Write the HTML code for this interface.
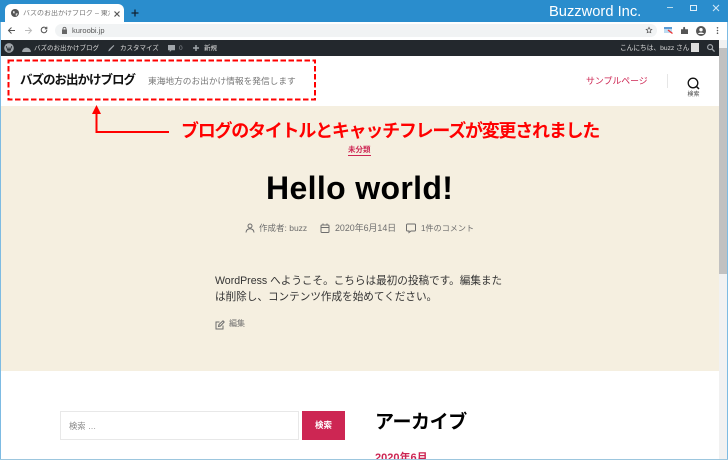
<!DOCTYPE html>
<html lang="ja"><head><meta charset="utf-8">
<style>
html,body{margin:0;padding:0;width:728px;height:460px;overflow:hidden;background:#fff}
body{position:relative;font-family:"Liberation Sans","Noto Sans CJK JP",sans-serif}
.a{position:absolute;white-space:nowrap;line-height:1}
svg{position:absolute;overflow:visible}
</style></head><body>
<!-- title bar -->
<div class="a" style="left:0;top:0;width:728px;height:22px;background:#2a8dcd"></div>
<div class="a" style="left:5px;top:4px;width:119px;height:18px;background:#fff;border-radius:6px 6px 0 0"></div>
<svg style="left:11px;top:9px" width="8" height="8" viewBox="0 0 12 12"><circle cx="6" cy="6" r="6" fill="#555"/><path d="M3 3l3 1-1 3-2-1zM7 7l3-1-1 4-2 0z" fill="#ddd"/></svg>
<div class="a" style="left:23px;top:10px;font-size:7px;color:#777;width:87px;overflow:hidden">バズのお出かけブログ – 東海地方のお</div>
<svg style="left:113.500px;top:10.500px" width="6" height="6"><path d="M0.500 0.500l5 5M5.500 0.500l-5 5" stroke="#555" stroke-width="1.200"/></svg>
<svg style="left:131px;top:9px" width="8" height="8"><path d="M4 0.500v7M0.500 4h7" stroke="#123" stroke-width="1.300"/></svg>
<div class="a" style="left:549px;top:3px;font-size:14.700px;color:#fff;line-height:19px">Buzzword Inc.</div>
<div class="a" style="left:667px;top:7px;width:6px;height:1px;background:#bde"></div>
<div class="a" style="left:690px;top:5px;width:5px;height:4px;border:1px solid #dfeefa"></div>
<svg style="left:713px;top:5px" width="6" height="6"><path d="M0 0l6 6M6 0l-6 6" stroke="#cfe6f6" stroke-width="1.100"/></svg>
<!-- toolbar -->
<div class="a" style="left:0;top:22px;width:728px;height:18px;background:#fff"></div>
<div class="a" style="left:55px;top:24px;width:602px;height:13px;background:#f1f3f4;border-radius:7px"></div>
<svg style="left:8px;top:27px" width="24" height="7" viewBox="0 0 24 7" fill="none" stroke-width="1"><path d="M7 3.500H0.500M3.500 0.500L0.500 3.500 3.500 6.500" stroke="#555"/><path d="M17 3.500h6.500M20.500 0.500L23.500 3.500 20.500 6.500" stroke="#bbb"/></svg>
<svg style="left:40px;top:26px" width="8" height="8" viewBox="0 0 10 10" fill="none"><path d="M8.500 5a3.500 3.500 0 1 1-1-2.500M8.500 1v2.500H6" stroke="#555" stroke-width="1.300"/></svg>
<svg style="left:62px;top:27px" width="5" height="7"><rect x="0" y="2.500" width="5" height="4.500" fill="#666"/><path d="M1 3V1.800a1.500 1.500 0 0 1 3 0V3" fill="none" stroke="#666" stroke-width="0.900"/></svg>
<div class="a" style="left:72px;top:26.500px;font-size:7.500px;color:#555">kuroobi.jp</div>
<svg style="left:646px;top:27px" width="6" height="6" viewBox="0 0 10 10"><path d="M5 0.500l1.400 3 3.300 0.400-2.400 2.200 0.700 3.300L5 8.100 2 9.400l0.700-3.300L0.300 3.900l3.300-0.400z" fill="none" stroke="#555" stroke-width="1.200"/></svg>
<div class="a" style="left:664px;top:27px;width:8px;height:6px;background:#bcdcf2;border-top:2px solid #5b9bd5;box-sizing:border-box"></div>
<svg style="left:668px;top:30px" width="5" height="4"><path d="M0 0l4.500 3.500" stroke="#e33" stroke-width="1.300"/></svg>
<svg style="left:681px;top:27px" width="7" height="7" viewBox="0 0 8 8"><path d="M0 2.500h2.500V1a1 1 0 0 1 2.200 0v1.500H8V8H0z" fill="#555"/></svg>
<svg style="left:696px;top:26px" width="10" height="10"><circle cx="5" cy="5" r="5" fill="#555"/><circle cx="5" cy="3.700" r="1.700" fill="#fff"/><path d="M1.800 8a3.500 2.500 0 0 1 6.400 0z" fill="#fff"/></svg>
<svg style="left:716px;top:27px" width="3" height="7"><circle cx="1.500" cy="0.800" r="0.800" fill="#555"/><circle cx="1.500" cy="3.500" r="0.800" fill="#555"/><circle cx="1.500" cy="6.200" r="0.800" fill="#555"/></svg>
<!-- admin bar -->
<div class="a" style="left:0;top:40px;width:719px;height:16px;background:#23282d"></div>
<svg style="left:4px;top:43px" width="10" height="10" viewBox="0 0 11 11"><circle cx="5.500" cy="5.500" r="5.300" fill="#a0a5aa"/><path d="M2.500 3.500l2 5 1-3 1 3 2-5" stroke="#23282d" fill="none"/></svg>
<svg style="left:22px;top:45px" width="9" height="7" viewBox="0 0 10 8"><path d="M0 8a5 5 0 0 1 10 0z" fill="#a0a5aa"/></svg>
<div class="a" style="left:34px;top:46px;font-size:6.500px;color:#ddd">バズのお出かけブログ</div>
<svg style="left:108px;top:45px" width="7" height="7" viewBox="0 0 10 10"><path d="M0 9c2 0 3-1 3.500-2L9 1 8 0 2 5.500C1 6.500 1 8 0 9z" fill="#a0a5aa"/></svg>
<div class="a" style="left:120px;top:46px;font-size:6.500px;color:#ddd">カスタマイズ</div>
<svg style="left:168px;top:45px" width="7" height="7" viewBox="0 0 8 8"><path d="M0 0h8v6H4L2 8V6H0z" fill="#a0a5aa"/></svg>
<div class="a" style="left:179px;top:46px;font-size:6.500px;color:#8a8f94">0</div>
<svg style="left:193px;top:45px" width="6" height="6" viewBox="0 0 8 8"><path d="M4 0v8M0 4h8" stroke="#a0a5aa" stroke-width="2"/></svg>
<div class="a" style="left:204px;top:46px;font-size:6.500px;color:#ddd">新規</div>
<div class="a" style="left:620px;top:46px;font-size:6.700px;color:#ddd">こんにちは、buzz さん</div>
<div class="a" style="left:691px;top:43px;width:8px;height:9px;background:#ddd"></div>
<svg style="left:707px;top:44px" width="8" height="8" viewBox="0 0 9 9" fill="none"><circle cx="3.500" cy="3.500" r="2.800" stroke="#a0a5aa" stroke-width="1.300"/><path d="M5.500 5.500L8.500 8.500" stroke="#a0a5aa" stroke-width="1.500"/></svg>
<!-- scrollbar -->
<div class="a" style="left:719px;top:40px;width:8px;height:420px;background:#f1f1f1"></div>
<div class="a" style="left:719px;top:48px;width:8px;height:226px;background:#c1c1c1"></div>
<div class="a" style="left:0;top:22px;width:1px;height:438px;background:#7dbbe3"></div>
<div class="a" style="left:727px;top:22px;width:1px;height:438px;background:#7dbbe3"></div>
<!-- header -->
<div class="a" style="left:20px;top:73.500px;font-size:12.500px;font-weight:bold;color:#111;letter-spacing:-1px">バズのお出かけブログ</div>
<div class="a" style="left:148px;top:76.500px;font-size:8.700px;color:#777">東海地方のお出かけ情報を発信します</div>
<div class="a" style="left:586px;top:76.500px;font-size:8.900px;color:#cd2653">サンプルページ</div>
<div class="a" style="left:667px;top:74px;width:1px;height:14px;background:#e6e6e6"></div>
<svg style="left:687px;top:76.500px" width="14" height="14" fill="none"><circle cx="6" cy="6" r="4.800" stroke="#111" stroke-width="1.300"/><path d="M9.500 9.500L12 12" stroke="#111" stroke-width="1.500"/></svg>
<div class="a" style="left:687.500px;top:92px;font-size:6px;color:#444">検索</div>
<!-- hero -->
<div class="a" style="left:1px;top:106px;width:718px;height:265px;background:#f5efe0"></div>
<!-- annotation -->
<svg style="left:0;top:0" width="728" height="140"><rect x="8.500" y="60.500" width="306.500" height="39" fill="none" stroke="#f00" stroke-width="2" stroke-dasharray="5.500 2.500"/><path d="M96.500 112V132H169" fill="none" stroke="#f00" stroke-width="2"/><path d="M96.500 105L101 114H92z" fill="#f00"/></svg>
<div class="a" style="left:181px;top:122px;font-size:18px;font-weight:bold;color:#f00;letter-spacing:-1.240px">ブログのタイトルとキャッチフレーズが変更されました</div>
<div class="a" style="left:348px;top:146px;font-size:7.500px;font-weight:bold;color:#cd2653">未分類</div>
<div class="a" style="left:348px;top:155px;width:23px;height:1px;background:#cd2653"></div>
<div class="a" style="left:266px;top:170px;font-size:32px;font-weight:bold;color:#000;letter-spacing:0.350px;line-height:36px">Hello world!</div>
<svg style="left:245px;top:223px" width="10" height="10" fill="none" stroke="#6d6d6d"><circle cx="5" cy="3" r="2"/><path d="M1 9.500c0-5 8-5 8 0"/></svg>
<div class="a" style="left:259px;top:223.500px;font-size:8.500px;color:#6d6d6d">作成者: buzz</div>
<svg style="left:320px;top:223px" width="10" height="10" fill="none" stroke="#6d6d6d"><rect x="1" y="2" width="8" height="7.500" rx="1"/><path d="M1 4.500h8M3 0.500v2M7 0.500v2"/></svg>
<div class="a" style="left:335px;top:223.500px;font-size:8.900px;color:#6d6d6d">2020年6月14日</div>
<svg style="left:406px;top:223px" width="10" height="10" fill="none" stroke="#6d6d6d"><path d="M1.500 1h7a1 1 0 0 1 1 1v5a1 1 0 0 1-1 1H5L3 9.500V8H1.500a1 1 0 0 1-1-1V2a1 1 0 0 1 1-1z"/></svg>
<div class="a" style="left:421px;top:224.500px;font-size:8.100px;color:#6d6d6d">1件のコメント</div>
<div class="a" style="left:215px;top:274px;font-size:10.600px;line-height:15.500px;color:#333">WordPress へようこそ。こちらは最初の投稿です。編集また<br>は削除し、コンテンツ作成を始めてください。</div>
<svg style="left:215px;top:320px" width="10" height="10" fill="none" stroke="#6d6d6d"><path d="M8 5.500V9H1V2h3.500M3.500 6.500l.5-2L8 .800 9.200 2 5.500 6z"/></svg>
<div class="a" style="left:229px;top:320px;font-size:8px;color:#6d6d6d">編集</div>
<!-- widgets -->
<div class="a" style="left:60px;top:411px;width:239px;height:29px;border:1px solid #e8e8e8;box-sizing:border-box;background:#fff"></div>
<div class="a" style="left:69px;top:421.500px;font-size:8.300px;color:#888">検索 …</div>
<div class="a" style="left:302px;top:411px;width:43px;height:29px;background:#cd2653"></div>
<div class="a" style="left:315px;top:421px;font-size:8.500px;font-weight:bold;color:#fff">検索</div>
<div class="a" style="left:375px;top:413px;font-size:19px;font-weight:bold;color:#000;letter-spacing:-0.400px">アーカイブ</div>
<div class="a" style="left:375px;top:453px;font-size:11px;font-weight:bold;color:#cd2653">2020年6月</div>
<div class="a" style="left:0;top:459px;width:728px;height:1px;background:#9cc6de"></div>
</body></html>
